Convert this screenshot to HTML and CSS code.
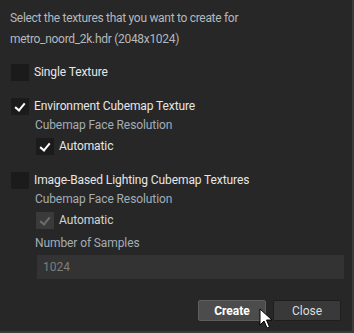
FILE: index.html
```html
<!DOCTYPE html>
<html lang="en">
<head>
    <meta charset="UTF-8">
    <title>Create Textures</title>
    <link rel="stylesheet" href="styles.css">
</head>
<body>
    <div class="dialog">
        <p class="intro">Select the textures that you want to create for<br>metro_noord_2k.hdr (2048x1024)</p>

        <div class="option">
            <label class="check"><span class="box"></span>Single Texture</label>
        </div>

        <div class="option">
            <label class="check"><span class="box on"></span>Environment Cubemap Texture</label>
            <div class="sub">
                <div class="caption">Cubemap Face Resolution</div>
                <label class="check"><span class="box on"></span>Automatic</label>
            </div>
        </div>

        <div class="option">
            <label class="check"><span class="box"></span>Image-Based Lighting Cubemap Textures</label>
            <div class="sub">
                <div class="caption">Cubemap Face Resolution</div>
                <label class="check disabled"><span class="box on"></span>Automatic</label>
                <div class="caption samples">Number of Samples</div>
                <input class="field" type="text" value="1024" disabled>
            </div>
        </div>

        <div class="actions">
            <button class="btn hover">Create</button>
            <button class="btn">Close</button>
            <svg class="cursor" width="14" height="22" viewBox="0 0 14 22">
                <path d="M1 1 L1 17 L5 13 L8 20 L10.5 19 L7.5 12 L13 12 Z" fill="#fff" stroke="#000" stroke-width="1"/>
            </svg>
        </div>
    </div>
</body>
</html>
```

FILE: styles.css
```css
body {
    margin: 0;
    background: #272727;
    font-family: "Roboto", "Open Sans", sans-serif;
    font-size: 12px;
    letter-spacing: -0.1px;
}
.dialog {
    position: relative;
    box-sizing: border-box;
    width: 354px;
    height: 333px;
    border-right: 2px solid #3a3a3a;
    border-bottom: 2px solid #3a3a3a;
    padding: 8px 10px 0 10px;
}
.intro {
    margin: 0 0 13px 0;
    color: #b4b8bc;
    line-height: 21px;
    height: 42px;
    letter-spacing: -0.3px;
}
.option {
    margin-bottom: 16px;
}
.check {
    display: flex;
    align-items: center;
    height: 18px;
    line-height: 18px;
    color: #e6e6e6;
}
.box {
    flex: none;
    width: 18px;
    height: 17px;
    margin-left: 1px;
    margin-right: 5px;
    background: #1b1b1b;
    position: relative;
}
.box.on::after {
    content: "";
    position: absolute;
    left: 6px;
    top: 3px;
    width: 4px;
    height: 8px;
    border-right: 2px solid #fff;
    border-bottom: 2px solid #fff;
    transform: rotate(40deg);
}
.check.disabled {
    color: #d4d4d4;
}
.check.disabled .box {
    background: #3a3a3a;
}
.check.disabled .box.on::after {
    border-color: #6c6c6c;
}
.sub {
    padding-left: 25px;
}
.caption {
    color: #a3adb6;
    height: 20px;
    line-height: 20px;
    margin-bottom: 2px;
}
.caption.samples {
    margin-top: 4px;
    margin-bottom: 0;
}
.field {
    display: block;
    width: 307px;
    height: 24px;
    box-sizing: border-box;
    margin: 2px 0 0 2px;
    padding: 0 6px;
    border: none;
    background: #333333;
    color: #7e7e7e;
    font-family: inherit;
    font-size: 12px;
}
.actions {
    position: relative;
    display: flex;
    justify-content: flex-end;
    gap: 7px;
    margin-top: 21px;
    padding-right: 1px;
}
.btn {
    width: 68px;
    height: 21px;
    border: 1px solid #1e1e1e;
    border-radius: 2px;
    background: #393939;
    color: #dcdcdc;
    font-family: inherit;
    font-size: 12px;
    padding: 0;
}
.btn.hover {
    background: #4c4c4c;
    border-color: #5e5e5e;
    color: #fff;
    font-weight: 700;
}
.cursor {
    position: absolute;
    left: 249px;
    top: 8px;
}
```
